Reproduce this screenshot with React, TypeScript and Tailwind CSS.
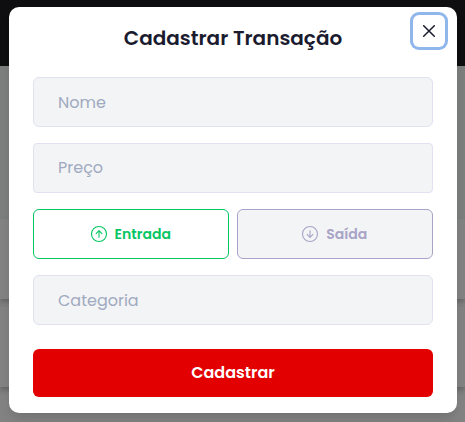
import { useState } from "react";

const field =
  "block h-[50px] w-full border border-[#e0e1f1] bg-[#f3f4f6] px-6 text-base leading-6 text-[#2d3748] outline-none placeholder:text-[#a0aac0]";

function ArrowCircle({ down = false }: { down?: boolean }) {
  return (
    <svg
      width="18"
      height="18"
      viewBox="0 0 18 18"
      fill="none"
      stroke="currentColor"
      strokeWidth="1.1"
      strokeLinecap="round"
      strokeLinejoin="round"
      className={down ? "shrink-0 rotate-180" : "shrink-0"}
    >
      <circle cx="9" cy="9" r="7.5" />
      <path d="M9 12.3V5.8M6.1 8.6L9 5.7l2.9 2.9" />
    </svg>
  );
}

function Backdrop() {
  return (
    <div className="absolute inset-0 flex flex-col bg-[#828282]">
      <div className="h-[66px] shrink-0 bg-[#0e0e10]" />
      <div className="h-[153px] shrink-0 bg-[#7d7f7e]" />
      <div className="h-[80px] shrink-0 bg-[#838383] shadow-[0_3px_5px_rgba(0,0,0,0.22)]" />
      <div className="mt-2 h-[80px] shrink-0 bg-[#838383] shadow-[0_3px_5px_rgba(0,0,0,0.22)]" />
      <div className="mt-2 h-[80px] shrink-0 bg-[#838383]" />
    </div>
  );
}

export default function App() {
  const [type, setType] = useState("in");
  const button = "flex h-[50px] items-center justify-center gap-[7px] rounded-[6px] border pr-[1.5px] text-sm font-semibold ";
  const active = "border-[#04c662] bg-white text-[#04c662]";
  const idle = "border-[#a8a3c7] bg-[#f3f4f6] text-[#a8a3c7]";
  return (
    <div className="relative h-[422px] w-[465px] overflow-hidden font-[Poppins,Inter,sans-serif]">
      <Backdrop />
      <main className="relative ml-[9px] mt-[7px] h-[406px] w-[448px] rounded-[10px] bg-white px-6 pt-4 shadow-[0_10px_15px_-3px_rgba(0,0,0,0.1),0_4px_6px_-2px_rgba(0,0,0,0.05)]">
        <h1 className="text-center text-xl leading-[30px] font-semibold text-[#1b1b2f]">Cadastrar Transação</h1>
        <button
          aria-label="Fechar"
          className="absolute top-2 right-3 flex h-8 w-8 items-center justify-center rounded-md text-[#1b1b2f] shadow-[0_0_0_3px_#90b7ec]"
        >
          <svg width="12" height="12" viewBox="0 0 12 12" stroke="currentColor" strokeWidth="1.5" strokeLinecap="round">
            <path d="M.7.7l10.6 10.6M11.3.7L.7 11.3" />
          </svg>
        </button>
        <form className="flex flex-col gap-4 pt-6" onSubmit={(e) => e.preventDefault()}>
          <input className={field + " rounded-[6px]"} placeholder="Nome" />
          <input className={field + " rounded-[4px] pb-[2px]"} placeholder="Preço" />
          <div className="grid grid-cols-2 gap-2">
            <button type="button" onClick={() => setType("in")} className={button + (type === "in" ? active : idle)}>
              <ArrowCircle />
              <span>Entrada</span>
            </button>
            <button type="button" onClick={() => setType("out")} className={button + (type === "out" ? active : idle)}>
              <ArrowCircle down />
              <span>Saída</span>
            </button>
          </div>
          <input className={field + " rounded-[6px]"} placeholder="Categoria" />
          <button className="mt-2 h-12 rounded-[6px] bg-[#e30000] text-base font-semibold text-white">Cadastrar</button>
        </form>
      </main>
    </div>
  );
}
